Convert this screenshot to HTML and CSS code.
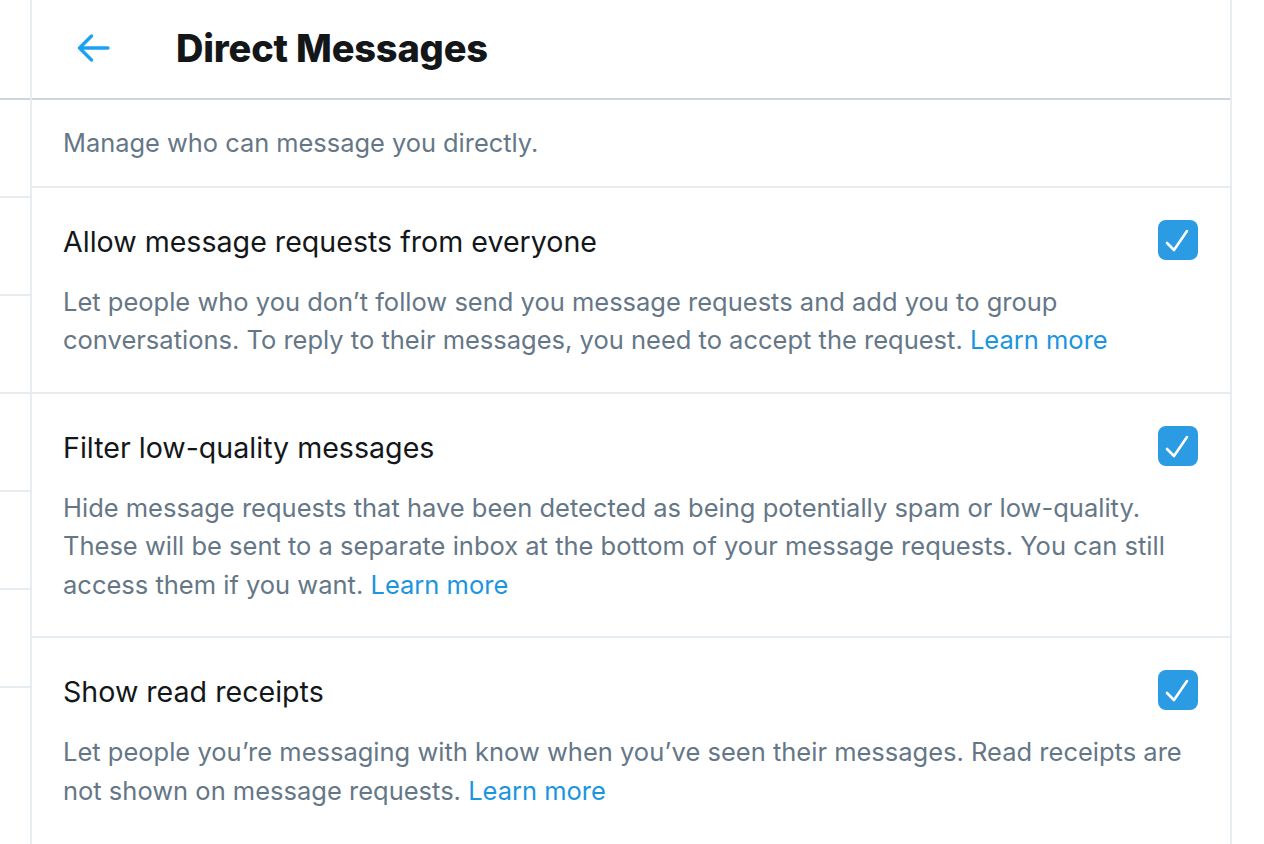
FILE: index.html
```html
<!DOCTYPE html>
<html lang="en">
<head>
<meta charset="utf-8">
<title>Direct Messages</title>
<link rel="stylesheet" href="styles.css">
</head>
<body>
<div class="page">
  <aside class="side">
    <div class="side-head"></div>
    <div class="side-row"></div>
    <div class="side-row"></div>
    <div class="side-row"></div>
    <div class="side-row"></div>
    <div class="side-row"></div>
    <div class="side-row"></div>
  </aside>
  <main class="main">
    <header class="head">
      <button class="back" aria-label="Back">
        <svg width="34" height="30" viewBox="0 0 34 30"><path d="M32 15H3.5M15.5 3L3.5 15L15.5 27" fill="none" stroke="#1da1f2" stroke-width="3.4" stroke-linecap="round" stroke-linejoin="round"/></svg>
      </button>
      <h1 class="title">Direct Messages</h1>
    </header>
    <p class="intro">Manage who can message you directly.</p>
    <section class="setting">
      <div class="setting-row">
        <span class="setting-title">Allow message requests from everyone</span>
        <span class="check"><svg width="40" height="40" viewBox="0 0 40 40"><path d="M9 23L16 30L29 11" fill="none" stroke="#fff" stroke-width="2.6" stroke-linecap="round" stroke-linejoin="round"/></svg></span>
      </div>
      <p class="desc">Let people who you don’t follow send you message requests and add you to group conversations. To reply to their messages, you need to accept the request. <a class="link" href="#">Learn more</a></p>
    </section>
    <section class="setting">
      <div class="setting-row">
        <span class="setting-title">Filter low-quality messages</span>
        <span class="check"><svg width="40" height="40" viewBox="0 0 40 40"><path d="M9 23L16 30L29 11" fill="none" stroke="#fff" stroke-width="2.6" stroke-linecap="round" stroke-linejoin="round"/></svg></span>
      </div>
      <p class="desc">Hide message requests that have been detected as being potentially spam or low-quality. These will be sent to a separate inbox at the bottom of your message requests. You can still access them if you want. <a class="link" href="#">Learn more</a></p>
    </section>
    <section class="setting last">
      <div class="setting-row">
        <span class="setting-title">Show read receipts</span>
        <span class="check"><svg width="40" height="40" viewBox="0 0 40 40"><path d="M9 23L16 30L29 11" fill="none" stroke="#fff" stroke-width="2.6" stroke-linecap="round" stroke-linejoin="round"/></svg></span>
      </div>
      <p class="desc">Let people you’re messaging with know when you’ve seen their messages. Read receipts are not shown on message requests. <a class="link" href="#">Learn more</a></p>
    </section>
  </main>
</div>
</body>
</html>
```

FILE: styles.css
```css
* { box-sizing: border-box; }
html, body { margin: 0; padding: 0; background: #fff; }
body {
  font-family: Inter, "Noto Sans", "Liberation Sans", sans-serif;
  color: #14171a;
  height: 844px;
  overflow: hidden;
}
.page {
  display: flex;
  width: 1232px;
  height: 844px;
  overflow: hidden;
}
.side {
  width: 32px;
  flex: none;
  border-right: 2px solid #e6ecf0;
  display: flex;
  flex-direction: column;
}
.side-head {
  height: 100px;
  border-bottom: 2px solid #ccd6dd;
  flex: none;
}
.side-row {
  height: 98px;
  flex: none;
  border-bottom: 2px solid #e6ecf0;
}
.main {
  flex: 1;
  border-right: 2px solid #e6ecf0;
  display: flex;
  flex-direction: column;
}
.head {
  height: 100px;
  flex: none;
  border-bottom: 2px solid #ccd6dd;
  display: flex;
  align-items: center;
  padding-left: 44px;
  padding-bottom: 2px;
}
.back {
  background: none;
  border: 0;
  padding: 0;
  width: 34px;
  height: 30px;
  display: flex;
  margin-right: 66px;
  cursor: pointer;
}
.title {
  margin: 0;
  font-size: 38px;
  font-weight: 800;
  letter-spacing: -0.2px;
  line-height: 46px;
}
.intro {
  margin: 0;
  padding: 24px 31px 23px;
  font-size: 25.4px;
  line-height: 38.5px;
  color: #657786;
  border-bottom: 2px solid #e6ecf0;
}
.setting {
  padding: 35px 32px 32px 31px;
  border-bottom: 2px solid #e6ecf0;
  flex: none;
}
.setting.last {
  padding-bottom: 48px;
}
.setting-row {
  display: flex;
  align-items: center;
  justify-content: space-between;
  height: 38px;
}
.setting-title {
  font-size: 28.6px;
  line-height: 38px;
  color: #14171a;
}
.check {
  width: 40px;
  height: 40px;
  border-radius: 8px;
  background: #2b9be3;
  display: flex;
  margin-top: -4px;
}
.desc {
  margin: 22px 0 0;
  font-size: 25.5px;
  line-height: 38.5px;
  color: #657786;
}
.link {
  color: #1b95e0;
  text-decoration: none;
}
```
